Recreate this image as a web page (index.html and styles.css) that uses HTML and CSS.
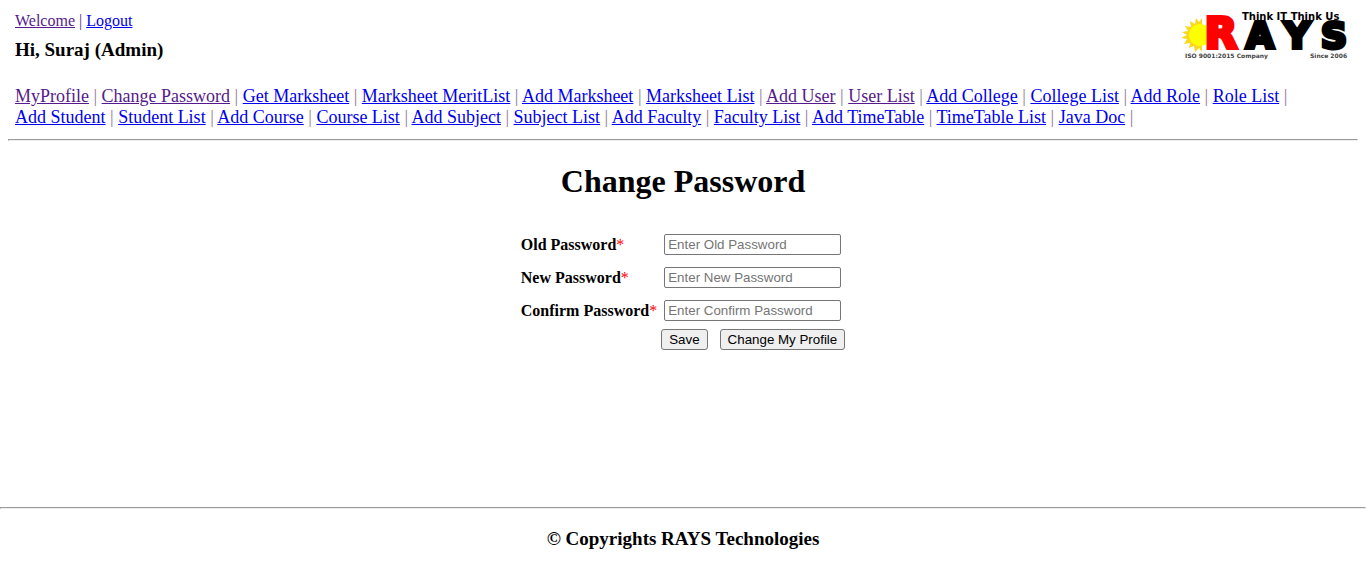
FILE: index.html
```html
<!DOCTYPE html>
<html lang="en">
<head>
<meta charset="utf-8">
<title>Change Password</title>
<link rel="stylesheet" href="styles.css">
</head>
<body>
<header class="header">
  <div class="top">
    <div class="account">
      <div class="session"><a class="visited" href="#">Welcome</a> | <a href="#">Logout</a></div>
      <div class="greeting">Hi, Suraj (Admin)</div>
    </div>
    <svg class="logo" viewBox="0 0 176 52" role="img" aria-label="RAYS">
      <path fill="#f8d820" d="M22 8l-3 4-3-4-1 6-5-3 1 6-6-1 3 5-6 1 5 3-6 3 6 1-3 5 6-1-1 5 5-2 1 6 4-4 3 4z"/>
      <circle cx="20" cy="25" r="11" fill="#ffff00"/>
      <g class="logo-name">
        <text class="logo-red" x="41" y="38">R</text>
        <text x="80" y="38">A</text>
        <text x="117" y="38">Y</text>
        <text x="154" y="38">S</text>
      </g>
      <text class="logo-motto" x="62" y="10">Think IT Think Us</text>
      <text class="logo-note" x="5" y="48">ISO 9001:2015 Company</text>
      <text class="logo-note" x="130" y="48">Since 2006</text>
    </svg>
  </div>
  <nav class="menu">
    <a class="visited" href="#">MyProfile</a> |
    <a class="visited" href="#">Change Password</a> |
    <a href="#">Get Marksheet</a> |
    <a href="#">Marksheet MeritList</a> |
    <a href="#">Add Marksheet</a> |
    <a href="#">Marksheet List</a> |
    <a class="visited" href="#">Add User</a> |
    <a class="visited" href="#">User List</a> |
    <a href="#">Add College</a> |
    <a href="#">College List</a> |
    <a href="#">Add Role</a> |
    <a href="#">Role List</a> |
    <a href="#">Add Student</a> |
    <a href="#">Student List</a> |
    <a href="#">Add Course</a> |
    <a href="#">Course List</a> |
    <a href="#">Add Subject</a> |
    <a href="#">Subject List</a> |
    <a href="#">Add Faculty</a> |
    <a href="#">Faculty List</a> |
    <a href="#">Add TimeTable</a> |
    <a href="#">TimeTable List</a> |
    <a href="#">Java Doc</a> |
  </nav>
</header>
<hr class="rule rule-inset">
<main class="content">
  <h1 class="title">Change Password</h1>
  <form class="form">
    <label class="label" for="old">Old Password<span class="required">*</span></label>
    <input class="field" id="old" type="password" placeholder="Enter Old Password">
    <label class="label" for="new">New Password<span class="required">*</span></label>
    <input class="field" id="new" type="password" placeholder="Enter New Password">
    <label class="label" for="confirm">Confirm Password<span class="required">*</span></label>
    <input class="field" id="confirm" type="password" placeholder="Enter Confirm Password">
    <div class="actions">
      <button class="button" type="submit">Save</button>
      <button class="button" type="button">Change My Profile</button>
    </div>
  </form>
</main>
<footer class="footer">
  <hr class="rule">
  <div class="copyright">© Copyrights RAYS Technologies</div>
</footer>
</body>
</html>
```
FILE: styles.css
```css
* {
  box-sizing: border-box;
}
body {
  margin: 0;
  min-height: 100vh;
  display: flex;
  flex-direction: column;
  font-family: "Liberation Serif", "Times New Roman", serif;
  font-size: 18px;
  line-height: 21px;
  color: #000;
  background: #fff;
}
a {
  color: #0000ee;
}
.visited {
  color: #551a8b;
}
.header {
  padding: 10px 15px 0;
}
.top {
  display: flex;
  justify-content: space-between;
  align-items: flex-start;
}
.session {
  font-size: 16px;
  color: #551a8b;
}
.greeting {
  margin-top: 8px;
  font-size: 19px;
  font-weight: bold;
}
.logo {
  width: 176px;
  height: 52px;
  margin-right: -5px;
  overflow: visible;
}
.logo-name {
  font: bold 36px "DejaVu Sans", sans-serif;
  text-anchor: middle;
  stroke: #000;
  stroke-width: 4px;
}
.logo-red {
  font-size: 42px;
  fill: #f00;
  stroke: #f00;
}
.logo-motto {
  font: bold 10px "DejaVu Sans", sans-serif;
}
.logo-note {
  font: bold 6px "DejaVu Sans", sans-serif;
  fill: #444;
}
.menu {
  margin-top: 24px;
  color: #8a7a9c;
}
.menu a {
  white-space: nowrap;
}
.rule {
  width: auto;
  height: 2px;
  margin: 0;
  border: 1px inset #eee;
}
.rule-inset {
  margin: 11px 8px 0;
}
.title {
  margin: 22px 0 34px;
  font-size: 32px;
  line-height: 37px;
  text-align: center;
}
.form {
  display: grid;
  grid-template-columns: max-content 181px;
  justify-content: center;
  align-items: center;
  column-gap: 7px;
  row-gap: 12px;
}
.label {
  font-size: 16px;
  font-weight: bold;
}
.required {
  color: #f00;
  font-weight: normal;
}
.field {
  width: 177px;
  height: 21px;
  padding: 1px 3px;
  border: 1px solid #767676;
  border-radius: 2px;
  font-family: "Liberation Sans", Arial, sans-serif;
}
.field::placeholder {
  color: #757575;
}
.actions {
  grid-column: 2;
  display: flex;
  gap: 12px;
  margin: -4px 0 0 -3px;
}
.button {
  flex: none;
  height: 21px;
  padding: 0 7px;
  border: 1px solid #767676;
  border-radius: 3px;
  background: #efefef;
  color: #000;
  font-family: "Liberation Sans", Arial, sans-serif;
  white-space: nowrap;
}
.footer {
  margin-top: auto;
  padding-bottom: 19px;
}
.copyright {
  margin-top: 19px;
  font-size: 19px;
  font-weight: bold;
  text-align: center;
}
```
